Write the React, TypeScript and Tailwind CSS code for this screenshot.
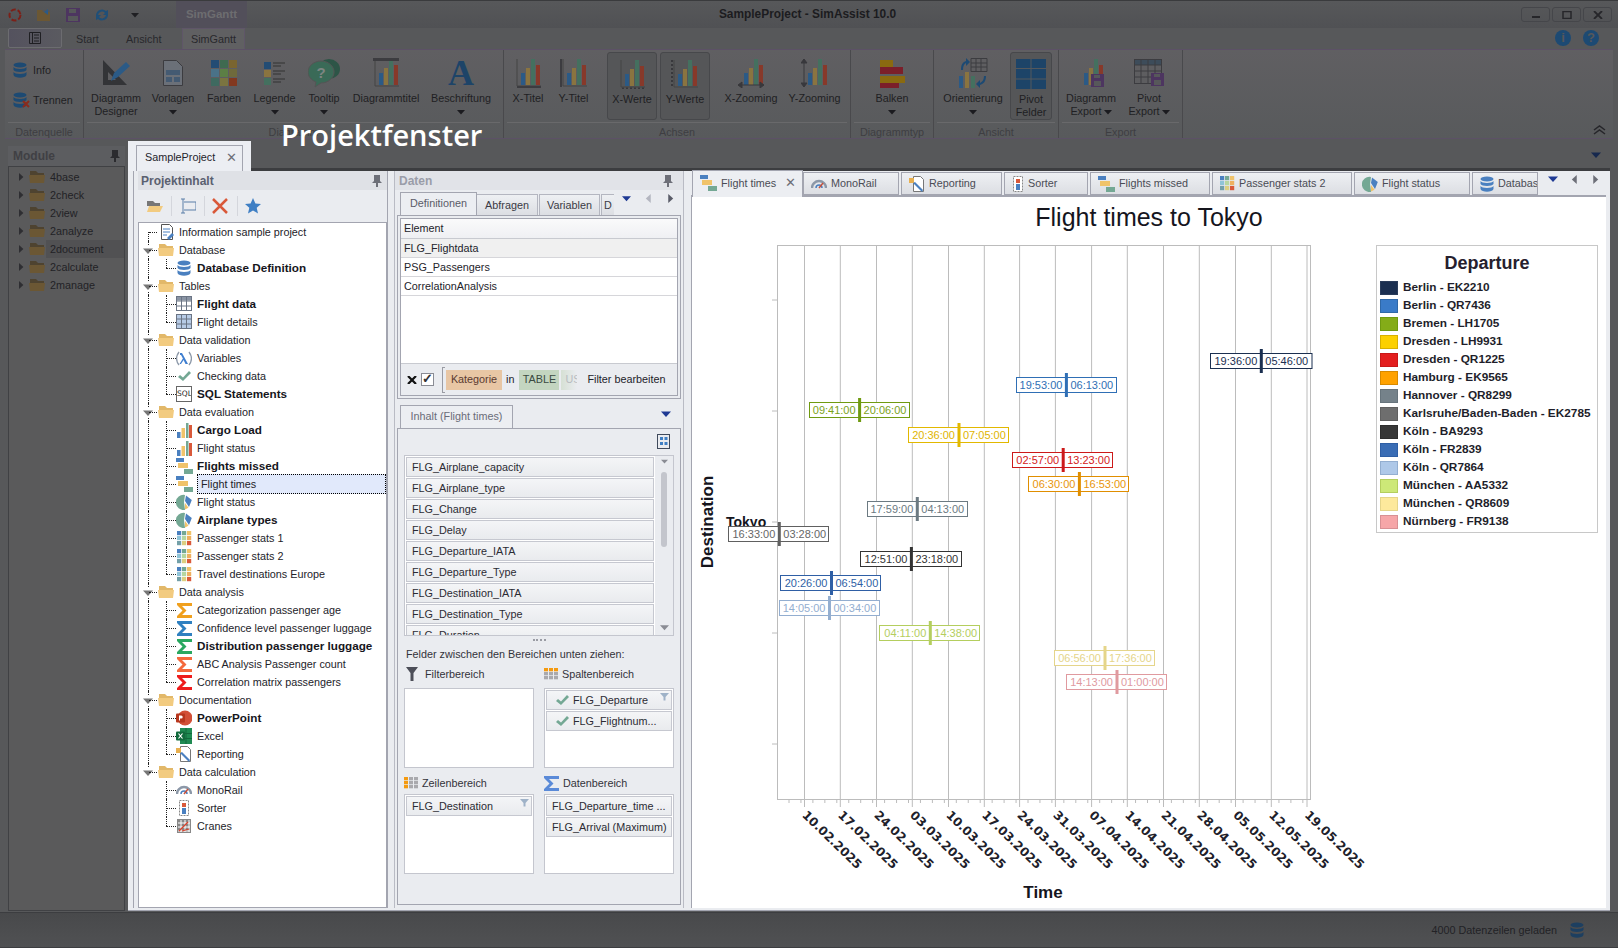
import type { ReactNode } from 'react'

type Pal = { b: string; y: string; g: string; r: string }
const dim: Pal = { b: '#2b5a86', y: '#8a7440', g: '#44705f', r: '#87392a' }
const lit: Pal = { b: '#4a80c0', y: '#f0c36a', g: '#74a894', r: '#d9593a' }

function Svg({ s = 16, w, h, children }: { s?: number; w?: number; h?: number; children: ReactNode }) {
  return <svg width={w ?? s} height={h ?? s} viewBox={`0 0 ${w ?? s} ${h ?? s}`} className="shrink-0">{children}</svg>
}

const Folder = ({ d }: { d?: boolean }) => (
  <Svg w={16} h={14}>
    <path d="M1 1h6l2 2h6v3H1z" fill={d ? '#4e4330' : '#e2b869'} />
    <path d="M1 13 0 5h16l-1 8z" fill={d ? '#6b5734' : '#f2cb80'} />
  </Svg>
)
const Db = ({ c = '#4a80c0' }: { c?: string }) => (
  <Svg w={14} h={16}>
    <ellipse cx="7" cy="3" rx="6.5" ry="2.6" fill={c} />
    <path d="M.5 5c1 2.6 12 2.6 13 0v3c-1 2.6-12 2.6-13 0zM.5 10c1 2.6 12 2.6 13 0v3c-1 3.6-12 3.6-13 0z" fill={c} />
  </Svg>
)
const Bars = ({ p = lit }: { p?: Pal }) => (
  <Svg>
    <rect x="1" y="10" width="3.5" height="6" fill={p.b} />
    <rect x="5.5" y="6" width="3.5" height="10" fill={p.y} />
    <rect x="10" y="1" width="2.5" height="15" fill={p.g} />
    <rect x="13" y="3" width="3" height="13" fill={p.r} />
  </Svg>
)
const Gantt = () => (
  <Svg w={17} h={16}>
    <rect x="0" y="0" width="8" height="4" fill="#4a80c0" />
    <rect x="2" y="5" width="10" height="5" fill="#f0c36a" />
    <rect x="8" y="11" width="9" height="5" fill="#74a894" />
  </Svg>
)
const Pie = () => (
  <Svg>
    <path d="M9 1A7.6 7.6 0 1 0 9 15.9L8 8z" fill="#74a894" />
    <path d="M10 1.5 15.8 6 13 13 9 7z" fill="#4a80c0" />
    <path d="M9 9l3.5 4.8L9 15.5z" fill="#f0c36a" />
  </Svg>
)
const Heat = () => (
  <Svg w={15} h={15}>
    {['#4a80c0', '#74a894', '#f0c36a', '#8fc4d8', '#b6d6a0', '#eeb060', '#74a0a8', '#dccf80', '#d9593a'].map((c, i) => (
      <rect key={i} x={(i % 3) * 5} y={Math.floor(i / 3) * 5} width="4.2" height="4.2" fill={c} />
    ))}
  </Svg>
)
const Sigma = ({ c }: { c: string }) => (
  <Svg w={15} h={15}>
    <path d="M0 0h15v3H5l4.5 4.5L5 12h10v3H0v-2l5.5-5.5L0 2z" fill={c} />
  </Svg>
)
const Doc = () => (
  <Svg>
    <path d="M3.500.5h8l3 3v12h-11z" fill="#fff" stroke="#555" />
    <path d="M5 5h7M5 8h7M5 11h4" stroke="#4a80c0" />
    <path d="m9 14 5-5 2 2-5 5z" fill="#4a80c0" />
  </Svg>
)
const Wand = () => (
  <Svg>
    <path d="M4.500.5h7l3 3v12h-10z" fill="#fff" stroke="#777" />
    <path d="M0 2h5v5H0z" fill="#e8b050" />
    <path d="m4 7 2-1 8 8-1 2z" fill="#4a80c0" />
  </Svg>
)
const Mono = () => (
  <Svg w={16} h={14}>
    <path d="M1 11a7 7 0 0 1 14 0" fill="none" stroke="#8c98a8" strokeWidth="2.400" />
    <path d="M5 11a3 3 0 0 1 6 0" fill="none" stroke="#4a80c0" strokeWidth="1.500" />
    <path d="m8 11 4-5" stroke="#c8503a" strokeWidth="1.500" />
  </Svg>
)
const Sorter = () => (
  <Svg w={12} h={16}>
    <rect x="1.500" y=".5" width="9" height="15" fill="#fff" stroke="#888" strokeDasharray="2 1" />
    <rect x="4" y="3" width="4" height="4" fill="#d9593a" />
    <rect x="4" y="8" width="4" height="6" fill="#4a80c0" />
  </Svg>
)
const Crane = () => (
  <Svg w={14} h={14}>
    <rect width="14" height="14" fill="#888" />
    <path d="M1 4h12M1 8h12M1 12h12M4 1v12M8 1v12M12 1v12" stroke="#fff" />
    <path d="m2 12 9-9M5 12l7-2" stroke="#d9402a" strokeWidth="1.300" />
  </Svg>
)
const GridBlue = ({ head }: { head?: boolean }) => (
  <Svg>
    <rect x=".5" y=".5" width="15" height="14" fill={head ? '#fff' : '#b7cbe6'} stroke="#6a7484" />
    {head && <rect x="1" y="1" width="14" height="3.500" fill="#8a94a4" />}
    <path d="M1 5h14M1 10h14M5.500 1v13M10.500 1v13" stroke="#6a7484" />
  </Svg>
)
const Lambda = () => (
  <Svg w={16} h={15}>
    <path d="M3 1C0 5 0 10 3 14M13 1c3 4 3 9 0 13" fill="none" stroke="#8c98a8" strokeWidth="1.300" />
    <path d="M4 2h2l6 11H9.500L7.600 9 5 13H3.500l3.400-5.500L5 4H4z" fill="#3f7fd0" />
  </Svg>
)
const Check = ({ c = '#74a894' }: { c?: string }) => (
  <Svg w={14} h={12}>
    <path d="m1 7 2-2 3 2.500L12 1l2 2-8 8z" fill={c} />
  </Svg>
)
const Ppt = () => (
  <Svg>
    <circle cx="9" cy="8" r="7.500" fill="#d24f36" />
    <rect x="0" y="3.500" width="9" height="9" rx="1" fill="#b7361d" />
    <path d="M3 5.500h2.200a1.500 1.500 0 0 1 0 3H4v2H3z" fill="#fff" />
  </Svg>
)
const Xls = () => (
  <Svg>
    <rect x="4" y="0" width="12" height="16" fill="#1f8a52" />
    <path d="M10 0v16M4 5.500h12M4 10.500h12" stroke="#12683c" />
    <rect x="0" y="3.500" width="9" height="9" rx="1" fill="#116b3d" />
    <path d="m2.500 5.500 4 5M6.500 5.500l-4 5" stroke="#fff" strokeWidth="1.200" />
  </Svg>
)
const Sql = () => (
  <span className="w-[16px] h-[16px] shrink-0 border border-[#666] text-[7.500px] leading-[14px] text-center text-[#222] font-['DejaVu_Sans',sans-serif] overflow-hidden">SQL</span>
)

const Tri = ({ c = '#2e2e32', d = 'down', w = 8 }: { c?: string; d?: 'down' | 'left' | 'right'; w?: number }) => (
  <Svg w={w} h={w}>
    <path d={d === 'down' ? `M0 ${w / 4}h${w}L${w / 2} ${w * 0.8}z` : d === 'right' ? `M${w / 4} 0v${w}L${w * 0.8} ${w / 2}z` : `M${w * 0.75} 0v${w}L${w * 0.2} ${w / 2}z`} fill={c} />
  </Svg>
)
const Pin = ({ c }: { c: string }) => (
  <Svg w={10} h={12}>
    <path d="M2 0h6v6l2 2H6v4H4V8H0l2-2z" fill={c} />
  </Svg>
)

type Row = { l: 0 | 1; t: string; b?: boolean; i: ReactNode; sel?: boolean; last?: boolean; end?: boolean; leaf?: boolean }
const fo = <Folder />
const rows: Row[] = [
  { l: 0, t: 'Information sample project', i: <Doc />, leaf: true },
  { l: 0, t: 'Database', i: fo },
  { l: 1, t: 'Database Definition', b: true, i: <Db />, last: true },
  { l: 0, t: 'Tables', i: fo },
  { l: 1, t: 'Flight data', b: true, i: <GridBlue head /> },
  { l: 1, t: 'Flight details', i: <GridBlue />, last: true },
  { l: 0, t: 'Data validation', i: fo },
  { l: 1, t: 'Variables', i: <Lambda /> },
  { l: 1, t: 'Checking data', i: <Check /> },
  { l: 1, t: 'SQL Statements', b: true, i: <Sql />, last: true },
  { l: 0, t: 'Data evaluation', i: fo },
  { l: 1, t: 'Cargo Load', b: true, i: <Bars /> },
  { l: 1, t: 'Flight status', i: <Bars /> },
  { l: 1, t: 'Flights missed', b: true, i: <Gantt /> },
  { l: 1, t: 'Flight times', i: <Gantt />, sel: true },
  { l: 1, t: 'Flight status', i: <Pie /> },
  { l: 1, t: 'Airplane types', b: true, i: <Pie /> },
  { l: 1, t: 'Passenger stats 1', i: <Heat /> },
  { l: 1, t: 'Passenger stats 2', i: <Heat /> },
  { l: 1, t: 'Travel destinations Europe', i: <Heat />, last: true },
  { l: 0, t: 'Data analysis', i: fo },
  { l: 1, t: 'Categorization passenger age', i: <Sigma c="#f0a01e" /> },
  { l: 1, t: 'Confidence level passenger luggage', i: <Sigma c="#2f80c0" /> },
  { l: 1, t: 'Distribution passenger luggage', b: true, i: <Sigma c="#2aa860" /> },
  { l: 1, t: 'ABC Analysis Passenger count', i: <Sigma c="#f4693c" /> },
  { l: 1, t: 'Correlation matrix passengers', i: <Sigma c="#ee1c1c" />, last: true },
  { l: 0, t: 'Documentation', i: fo },
  { l: 1, t: 'PowerPoint', b: true, i: <Ppt /> },
  { l: 1, t: 'Excel', i: <Xls /> },
  { l: 1, t: 'Reporting', i: <Wand />, last: true },
  { l: 0, t: 'Data calculation', i: fo, end: true },
  { l: 1, t: 'MonoRail', i: <Mono /> },
  { l: 1, t: 'Sorter', i: <Sorter /> },
  { l: 1, t: 'Cranes', i: <Crane />, last: true },
]

function TreeRow({ r, idx }: { r: Row; idx: number }) {
  const pastEnd = idx > 30
  return (
    <div className="relative flex items-center h-[18px] text-[10.800px] text-[#23232a]">
      {!r.end && !pastEnd && <span className={`absolute left-[9px] bottom-0 border-l border-dotted border-[#222] ${idx === 0 ? 'top-[9px]' : 'top-0'}`} />}
      {r.end && <span className="absolute left-[9px] top-0 h-[6px] border-l border-dotted border-[#222]" />}
      {r.l === 1 && (
        <>
          <span className={`absolute left-[27px] top-0 border-l border-dotted border-[#222] ${r.last ? 'h-[9px]' : 'h-[18px]'}`} />
          <span className="absolute left-[27px] top-[9px] w-[10px] border-t border-dotted border-[#222]" />
        </>
      )}
      {r.l === 0 && !r.leaf && (
        <span className="absolute left-[4px] top-[5px] bg-white">
          <Tri c="#777" w={10} />
        </span>
      )}
      {r.l === 0 && <span className="absolute left-[10px] top-[9px] w-[8px] border-t border-dotted border-[#222]" />}
      <span className={`relative flex items-center justify-center ${r.l === 0 ? 'ml-[19px] w-[16px]' : 'ml-[37px] w-[16px]'}`}>{r.i}</span>
      <span className={`ml-[5px] whitespace-nowrap leading-[18px] ${r.b ? 'font-bold text-[11.700px] text-[#16161c]' : ''} ${r.sel ? 'flex-1 ml-[1px] pl-[3px] bg-[#e1e9fb] border border-dotted border-black leading-[16px]' : ''}`}>{r.t}</span>
    </div>
  )
}

function RibbonBtn({ w, icon, l1, l2, arrow, active }: { w: number; icon: ReactNode; l1: string; l2?: string; arrow?: boolean; active?: boolean }) {
  return (
    <div style={{ width: w }} className={`flex flex-col items-center h-[68px] mt-[2px] pt-[6px] shrink-0 text-[10.800px] leading-[13px] text-[#1f1f23] ${active ? 'rounded-[3px] bg-[#555658] border border-[#47484b]' : ''}`}>
      <div className="h-[30px] flex items-center justify-center">{icon}</div>
      <div className="mt-[4px] whitespace-nowrap">{l1}</div>
      <div className="flex items-center gap-[2px] h-[13px] whitespace-nowrap">
        {l2}
        {arrow && <Tri c="#1b1b1f" w={8} />}
      </div>
    </div>
  )
}

function Group({ w, label, children }: { w: number; label: string; children?: ReactNode }) {
  return (
    <div style={{ width: w }} className="flex flex-col h-full border-r border-[#49494c] shrink-0">
      <div className="flex h-[72px]">{children}</div>
      <div className="mx-[3px] border-t border-[#69696b] h-[16px] text-center text-[10.800px] leading-[19px] text-[#3e3e42]">{label}</div>
    </div>
  )
}

const ChartIcon = ({ children, zoom }: { children?: ReactNode; zoom?: boolean }) => (
  <Svg w={28} h={30}>
    <rect x="7" y="15" width="4" height="12" fill={dim.b} />
    <rect x="12" y="10" width="4" height="17" fill={dim.y} />
    <rect x="17" y="1" width="4" height="26" fill={dim.g} />
    <rect x="22" y="7" width="4" height="20" fill={dim.r} />
    {!zoom && <path d="M3 1v27h24" fill="none" stroke="#444" />}
    {children}
  </Svg>
)

function Tab({ w, icon, t, active, close }: { w: number; icon: ReactNode; t: string; active?: boolean; close?: boolean }) {
  return (
    <div style={{ width: w }} className={`flex items-center gap-[4px] shrink-0 pl-[7px] text-[10.800px] text-[#4a4c55] whitespace-nowrap overflow-hidden border border-[#a3a5b0] ${active ? 'h-[27px] bg-[#eceef2] border-b-0 -mb-[2px] pb-[2px]' : 'h-[23px] bg-gradient-to-b from-[#eef0f3] to-[#dcdee3] mr-[2px]'}`}>
      {icon}
      <span className="flex-1">{t}</span>
      {close && <span className="mr-[6px] text-[13px] font-bold text-[#6d6f78] font-['DejaVu_Sans',sans-serif]">✕</span>}
    </div>
  )
}

function Field({ t, check, filter }: { t: string; check?: boolean; filter?: boolean }) {
  return (
    <div className="relative flex items-center gap-[4px] h-[20px] mb-[1px] pl-[5px] border border-[#c6c8d0] bg-gradient-to-b from-[#f4f5f7] to-[#e9ebee] text-[10.800px] text-[#2b2b33] whitespace-nowrap overflow-hidden shrink-0">
      {check && <span className="ml-[3px]"><Check /></span>}
      {t}
      {filter && (
        <svg width="9" height="9" viewBox="0 0 9 9" className="absolute right-[2px] top-[1px]">
          <path d="M0 1h9L5.500 5v3.500h-2V5z" fill="#9fb2c8" />
        </svg>
      )}
    </div>
  )
}

function DropBox({ icon, t, children, top }: { icon: ReactNode; t: string; children?: ReactNode; top?: boolean }) {
  return (
    <div className="w-[130px]">
      <div className={`flex items-center gap-[4px] text-[10.800px] text-[#33333b] ${top ? 'h-[20px] mb-[4px]' : 'h-[22px]'}`}>
        {icon}
        {t}
      </div>
      <div className="h-[80px] bg-white border border-[#c4c6ce] p-[1px] flex flex-col">{children}</div>
    </div>
  )
}

const MiniGrid = ({ a }: { a: 'top' | 'left' }) => (
  <Svg w={14} h={12}>
    {[0, 1, 2, 3, 4, 5, 6, 7, 8].map(i => {
      const x = (i % 3) * 5
      const y = Math.floor(i / 3) * 4
      const on = a === 'top' ? y === 0 : x === 0
      return <rect key={i} x={x} y={y} width="4" height="3.300" fill={on ? '#f49a10' : '#a9a9ad'} />
    })}
  </Svg>
)

const gridX = [803.5, 839.3, 875.5, 911.3, 947.5, 983.3, 1018.6, 1054.4, 1090.6, 1126.3, 1162.5, 1198.3, 1234.5, 1270.3, 1306]
const dates = ['10.02.2025', '17.02.2025', '24.02.2025', '03.03.2025', '10.03.2025', '17.03.2025', '24.03.2025', '31.03.2025', '07.04.2025', '14.04.2025', '21.04.2025', '28.04.2025', '05.05.2025', '12.05.2025', '19.05.2025']

const gantt = [
  { x1: 1209.5, x2: 1311, y: 353, lx: 1260.3, a: '19:36:00', b: '05:46:00', c: '#1b2f50', t: '#1b2f50' },
  { x1: 1015.5, x2: 1115.5, y: 377, lx: 1065.4, a: '19:53:00', b: '06:13:00', c: '#2f6fb5', t: '#2f6fb5' },
  { x1: 808.5, x2: 908.5, y: 402, lx: 858.6, a: '09:41:00', b: '20:06:00', c: '#6f9a10', t: '#7ba21a' },
  { x1: 907.5, x2: 1007.5, y: 427, lx: 958, a: '20:36:00', b: '07:05:00', c: '#e2b800', t: '#e0b400' },
  { x1: 1011.5, x2: 1111.5, y: 452, lx: 1062.2, a: '02:57:00', b: '13:23:00', c: '#cc1a1a', t: '#d42020' },
  { x1: 1027.5, x2: 1127.5, y: 476, lx: 1078.4, a: '06:30:00', b: '16:53:00', c: '#e08e00', t: '#e8950a' },
  { x1: 866.5, x2: 966.5, y: 501, lx: 916.3, a: '17:59:00', b: '04:13:00', c: '#6c7a82', t: '#6c7a82' },
  { x1: 727.5, x2: 827.5, y: 526, lx: 778.3, a: '16:33:00', b: '03:28:00', c: '#606060', t: '#666666' },
  { x1: 859.5, x2: 960.5, y: 551, lx: 910.4, a: '12:51:00', b: '23:18:00', c: '#333333', t: '#333333' },
  { x1: 779.5, x2: 879.5, y: 575, lx: 830.5, a: '20:26:00', b: '06:54:00', c: '#2f5fa5', t: '#2f5fa5' },
  { x1: 778.5, x2: 878.5, y: 600, lx: 828.5, a: '14:05:00', b: '00:34:00', c: '#93aed0', t: '#93aed0' },
  { x1: 878.5, x2: 978.5, y: 625, lx: 929.3, a: '04:11:00', b: '14:38:00', c: '#b4ce5e', t: '#b4ce5e' },
  { x1: 1053.5, x2: 1153.5, y: 650, lx: 1104, a: '06:56:00', b: '17:36:00', c: '#e5d58a', t: '#e5d58a' },
  { x1: 1065.5, x2: 1165.5, y: 674, lx: 1116, a: '14:13:00', b: '01:00:00', c: '#e09a9f', t: '#e09a9f' },
]

const legend = [
  ['Berlin - EK2210', 'bg-[#1b2f50] border-[#2a3c5a]'],
  ['Berlin - QR7436', 'bg-[#3a7bc8] border-[#2f68a8]'],
  ['Bremen - LH1705', 'bg-[#84ac18] border-[#6f9a10]'],
  ['Dresden - LH9931', 'bg-[#fcd000] border-[#d8b000]'],
  ['Dresden - QR1225', 'bg-[#e31e1e] border-[#c81818]'],
  ['Hamburg - EK9565', 'bg-[#ffa200] border-[#d88a00]'],
  ['Hannover - QR8299', 'bg-[#75828a] border-[#67747c]'],
  ['Karlsruhe/Baden-Baden - EK2785', 'bg-[#6e6e6e] border-[#606060]'],
  ['Köln - BA9293', 'bg-[#373737] border-[#2e2e2e]'],
  ['Köln - FR2839', 'bg-[#3a6db5] border-[#2f5fa5]'],
  ['Köln - QR7864', 'bg-[#aec8e8] border-[#93aed0]'],
  ['München - AA5332', 'bg-[#cde878] border-[#b4ce5e]'],
  ['München - QR8609', 'bg-[#fde99c] border-[#e5d58a]'],
  ['Nürnberg - FR9138', 'bg-[#f6a6a8] border-[#d89094]'],
]

function Plot() {
  const minor: number[] = []
  for (let x = 788; x < 1306; x += 11.95) minor.push(x)
  return (
    <svg width="684" height="711" viewBox="691 197 684 711" className="shrink-0 font-['Liberation_Sans',sans-serif]">
      <text x="1148" y="226" textAnchor="middle" fontSize="25" fill="#15151d">Flight times to Tokyo</text>
      <rect x="776.5" y="245.5" width="533" height="554" fill="none" stroke="#bcbcbc" />
      {gridX.map(x => <path key={x} d={`M${x} 245V807`} stroke="#bcbcbc" />)}
      {minor.map(x => <path key={x} d={`M${x} 799v4`} stroke="#bcbcbc" />)}
      {[300, 411, 522, 633, 744].map(y => <path key={y} d={`M771 ${y}h6`} stroke="#bcbcbc" />)}
      <text x="725" y="527" fontSize="14" fontWeight="700" fill="#15151d">Tokyo</text>
      <text transform="translate(712 522) rotate(-90)" textAnchor="middle" fontSize="17" fontWeight="700" fill="#15151d">Destination</text>
      {gantt.map(g => (
        <g key={g.a}>
          <rect x={g.x1} y={g.y + 0.5} width={g.x2 - g.x1} height="15" fill="#fff" stroke={g.c} />
          <text x={g.lx - 4} y={g.y + 12} textAnchor="end" fontSize="11" fill={g.t}>{g.a}</text>
          <text x={g.lx + 4} y={g.y + 12} fontSize="11" fill={g.t}>{g.b}</text>
          <rect x={g.lx - 1.5} y={g.y - 4} width="3" height="24" fill={g.c} />
        </g>
      ))}
      {dates.map((d, i) => (
        <text key={i} transform={`translate(${gridX[i] - 3} 816) rotate(44)`} fontSize="12.2" fontWeight="700" fontFamily="DejaVu Sans" fill="#20202a">{d}</text>
      ))}
      <text x="1042" y="898" textAnchor="middle" fontSize="17" fontWeight="700" fill="#15151d">Time</text>
    </svg>
  )
}

const scrollRows = ['FLG_Airplane_capacity', 'FLG_Airplane_type', 'FLG_Change', 'FLG_Delay', 'FLG_Departure_IATA', 'FLG_Departure_Type', 'FLG_Destination_IATA', 'FLG_Destination_Type', 'FLG_Duration']

export default function App() {
  return (
    <div className="relative w-[1618px] h-[948px] overflow-hidden bg-[#57585a] font-['Liberation_Sans',sans-serif] flex flex-col">
      {/* title bar */}
      <div className="relative flex items-center h-[28px] bg-gradient-to-b from-[#57585a] to-[#505154] border-t border-[#3a3b3d] shrink-0">
        <div className="flex items-center gap-[13px] pl-[7px]">
          <Svg>
            <circle cx="8" cy="8" r="5.500" fill="none" stroke="#7c2018" strokeWidth="2" strokeDasharray="5 2" />
          </Svg>
          <Svg>
            <path d="M1 3h5l1 2h7v9H1z" fill="#6b5734" />
            <path d="M8 5l4-3v6z" fill={dim.b} />
          </Svg>
          <Svg>
            <rect x="1" y="1" width="14" height="14" fill="#4d3560" />
            <rect x="4" y="2" width="7" height="4" fill="#57585a" />
            <rect x="3" y="9" width="10" height="5" fill="#57585a" />
          </Svg>
          <Svg>
            <path d="M2 8a6 6 0 0 1 10-4l2-1v5H9l2-2a4 4 0 0 0-7 2zM14 8a6 6 0 0 1-10 4l-2 1V8h5l-2 2a4 4 0 0 0 7-2z" fill="#1f4f78" />
          </Svg>
          <span className="ml-[8px]"><Tri c="#1f1f23" w={8} /></span>
        </div>
        <div className="absolute left-[176px] top-0 w-[71px] h-[27px] bg-[#524f5a] text-center text-[11.500px] font-bold leading-[27px] text-[#6d6d70]">SimGantt</div>
        <div className="absolute inset-x-0 text-center text-[11.900px] font-bold text-[#1c1c20] pr-[3px]">SampleProject - SimAssist 10.0</div>
        <div className="ml-auto flex gap-[2px] pr-[6px]">
          <span className="flex items-center justify-center w-[29px] h-[15px] rounded-[3px] border border-[#45464a]"><Svg w={10} h={8}><rect x="1" y="5" width="8" height="2" fill="#26262a" /></Svg></span>
          <span className="flex items-center justify-center w-[29px] h-[15px] rounded-[3px] border border-[#45464a]"><Svg w={10} h={8}><rect x="1" y=".5" width="8" height="7" fill="none" stroke="#26262a" strokeWidth="1.500" /></Svg></span>
          <span className="flex items-center justify-center w-[29px] h-[15px] rounded-[3px] border border-[#45464a]"><Svg w={10} h={8}><path d="m1 0 8 8M9 0 1 8" stroke="#26262a" strokeWidth="1.800" /></Svg></span>
        </div>
      </div>

      {/* ribbon tabs */}
      <div className="flex items-end h-[21px] pl-[8px] text-[10.800px] text-[#28282c] shrink-0 relative">
        <div className="flex items-center justify-center w-[54px] h-[20px] mb-[1px] rounded-[2px] bg-gradient-to-r from-[#54525e] to-[#5a5a60] border border-[#6c6c70]">
          <Svg w={14} h={14}>
            <path d="M1.500 1.500h11v11h-11zM4.500 1.500v11M6 4h5M6 7h5M6 10h5" fill="none" stroke="#1f1f23" />
          </Svg>
        </div>
        <div className="w-[14px]" />
        <div className="w-[24px] h-[20px] leading-[20px]">Start</div>
        <div className="w-[26px]" />
        <div className="w-[37px] h-[20px] leading-[20px]">Ansicht</div>
        <div className="w-[19px]" />
        <div className="w-[63px] h-[21px] bg-[#606062] border-x border-t border-[#5f5668] text-center leading-[20px]">SimGantt</div>
        <div className="absolute right-[19px] top-[2px] flex gap-[12px]">
          {['i', '?'].map(s => (
            <span key={s} className="w-[16px] h-[16px] rounded-full bg-[#1d4a73] text-center text-[13px] leading-[16px] font-bold text-[#57585a]">{s}</span>
          ))}
        </div>
      </div>

      {/* ribbon */}
      <div className="relative flex h-[90px] mx-[5px] bg-gradient-to-b from-[#605f62] to-[#585a5c] border-y border-[#5c5166] border-x-[#48484b] shrink-0">
        <Group w={79} label="Datenquelle">
          <div className="flex flex-col gap-[14px] pl-[8px] pt-[12px] text-[10.800px] text-[#1f1f23]">
            <div className="flex items-center gap-[6px] h-[16px]"><Db c="#1d4a73" />Info</div>
            <div className="flex items-center gap-[6px] h-[16px]">
              <span className="relative">
                <Db c="#1d4a73" />
                <span className="absolute -right-[3px] bottom-0"><Svg w={8} h={8}><path d="m1 1 6 6M7 1 1 7" stroke="#8a2b1c" strokeWidth="2" /></Svg></span>
              </span>
              Trennen
            </div>
          </div>
        </Group>
        <Group w={420} label="Diagramm">
          <RibbonBtn w={64} l1="Diagramm" l2="Designer" icon={
            <Svg w={30} h={28}>
              <path d="M2 1v25h24zM7 13v8h8z" fill="#333437" fillRule="evenodd" />
              <path d="m10 22 3-8L25 3l4 4-12 11z" fill="#2b5a86" />
            </Svg>} />
          <RibbonBtn w={50} l1="Vorlagen" arrow icon={
            <Svg w={20} h={26}>
              <path d="M.5.5h13l6 6v19H.5z" fill="#6b7078" stroke="#3c3c40" />
              <path d="M3 10h14v5H3zM3 17h6v5H3zM11 17h6v5h-6z" fill="#445a72" />
            </Svg>} />
          <RibbonBtn w={52} l1="Farben" icon={
            <Svg w={27} h={27}>
              {['#234c74', '#3f6a50', '#7a6530', '#4a7288', '#5c7f45', '#6f6a3c', '#3f6a60', '#7a7440', '#82381f'].map((c, i) => (
                <rect key={i} x={(i % 3) * 9} y={Math.floor(i / 3) * 9} width="8" height="8" fill={c} />
              ))}
            </Svg>} />
          <RibbonBtn w={49} l1="Legende" arrow icon={
            <Svg w={22} h={24}>
              <rect y="1" width="7" height="7" fill="#234c74" /><rect y="9" width="7" height="7" fill="#8a7440" /><rect y="17" width="7" height="7" fill="#44705f" />
              <path d="M9 2h12M9 5h8M9 10h12M9 13h8M9 18h12M9 21h8" stroke="#333" />
            </Svg>} />
          <RibbonBtn w={50} l1="Tooltip" arrow icon={
            <Svg w={32} h={30}>
              <ellipse cx="21" cy="11" rx="11" ry="10" fill="#2d5547" />
              <path d="M13 3c7 0 13 5 13 11s-6 11-13 11l-6 4 1-5C3 22 0 18 0 14 0 8 6 3 13 3z" fill="#3a6a57" stroke="#555" />
              <text x="13" y="20" textAnchor="middle" fontSize="15" fontWeight="700" fill="#7d8582">?</text>
            </Svg>} />
          <RibbonBtn w={74} l1="Diagrammtitel" icon={
            <ChartIcon>
              <rect x="1" y="0" width="26" height="3" fill="#3c3c40" />
            </ChartIcon>} />
          <RibbonBtn w={76} l1="Beschriftung" arrow icon={<span className="text-[36px] leading-[30px] font-bold text-[#1d4468] font-['Liberation_Serif',serif]">A</span>} />
        </Group>
        <Group w={347} label="Achsen">
          <div className="w-[2px]" />
          <RibbonBtn w={44} l1="X-Titel" icon={<ChartIcon><rect x="3" y="28" width="24" height="2" fill="#3c3c40" /></ChartIcon>} />
          <RibbonBtn w={47} l1="Y-Titel" icon={<ChartIcon><rect x="0" y="1" width="2" height="28" fill="#3c3c40" /></ChartIcon>} />
          <div className="w-[10px]" />
          <RibbonBtn w={50} l1="X-Werte" active icon={<ChartIcon><path d="M4 29.500h23" stroke="#38383c" strokeWidth="2" strokeDasharray="2 2" /></ChartIcon>} />
          <div className="w-[3px]" />
          <RibbonBtn w={50} l1="Y-Werte" active icon={<ChartIcon><path d="M1 1v27" stroke="#38383c" strokeWidth="2" strokeDasharray="2 2" /></ChartIcon>} />
          <div className="w-[12px]" />
          <RibbonBtn w={58} l1="X-Zooming" icon={<ChartIcon zoom><path d="M1 27h26M1 27l4-3v6zM27 27l-4-3v6z" stroke="#38383c" fill="#38383c" /></ChartIcon>} />
          <RibbonBtn w={69} l1="Y-Zooming" icon={<ChartIcon zoom><path d="M3 1v28M3 1 0 5h6zM3 29l-3-4h6z" stroke="#38383c" fill="#38383c" /></ChartIcon>} />
        </Group>
        <Group w={83} label="Diagrammtyp">
          <div className="w-[6px]" />
          <RibbonBtn w={70} l1="Balken" arrow icon={
            <Svg w={26} h={30}>
              <rect x="1" y="2" width="13" height="7" fill="#8a6a10" /><rect x="1" y="9" width="23" height="7" fill="#7b1f2a" />
              <rect x="1" y="18" width="25" height="7" fill="#8a6a10" /><rect x="1" y="25" width="19" height="5" fill="#7b1f2a" />
            </Svg>} />
        </Group>
        <Group w={125} label="Ansicht">
          <div className="w-[2px]" />
          <RibbonBtn w={74} l1="Orientierung" arrow icon={
            <Svg w={30} h={30}>
              <rect x="1" y="18" width="4" height="12" fill={dim.b} /><rect x="7" y="14" width="4" height="16" fill={dim.y} /><rect x="13" y="18" width="4" height="12" fill={dim.g} />
              <path d="M13 .5h16v13H13zM13 5h16M13 9h16M18 1v12M23 1v12" fill="none" stroke="#3c3c40" />
              <path d="M3 12c0-6 2-8 5-9V0l4 4-4 4V5c-2 1-3 3-3 7z M28 18c0 6-3 8-6 9v3l-4-4 4-4v3c2-1 4-3 4-7z" fill="#1d4a73" />
            </Svg>} />
          <RibbonBtn w={42} l1="Pivot" l2="Felder" active icon={
            <Svg w={30} h={30}>
              <rect width="30" height="30" fill="#1d4468" /><path d="M0 9.500h30M0 20h30M15 0v30" stroke="#54585c" />
            </Svg>} />
        </Group>
        <Group w={124} label="Export">
          <RibbonBtn w={64} l1="Diagramm" l2="Export" arrow icon={
            <ChartIcon zoom><rect x="14" y="16" width="13" height="13" fill="#4d3560" /><rect x="17" y="17" width="6" height="3" fill="#57585a" /><rect x="17" y="23" width="7" height="5" fill="#57585a" /></ChartIcon>} />
          <RibbonBtn w={52} l1="Pivot" l2="Export" arrow icon={
            <Svg w={30} h={28}>
              <rect x=".5" y=".5" width="27" height="24" fill="none" stroke="#3c3c40" /><rect x="1" y="1" width="26" height="5" fill="#3d4c5a" />
              <path d="M1 6h27M1 12h27M1 18h27M7 1v24M14 1v24M21 1v24" stroke="#3c3c40" />
              <rect x="17" y="14" width="13" height="13" fill="#4d3560" /><rect x="20" y="15" width="6" height="3" fill="#57585a" /><rect x="20" y="21" width="7" height="5" fill="#57585a" />
            </Svg>} />
        </Group>
        <span className="absolute right-[7px] bottom-[3px]">
          <svg width="13" height="10" viewBox="0 0 13 10"><path d="m1 5 5.500-4L12 5M1 9l5.500-4L12 9" fill="none" stroke="#26262a" strokeWidth="1.500" /></svg>
        </span>
      </div>

      {/* body */}
      <div className="flex flex-1 min-h-0">
        {/* modules, dimmed */}
        <div className="w-[128px] pl-[8px] pr-[3px] pt-[7px] shrink-0 flex flex-col h-[772px]">
          <div className="flex items-center justify-between h-[20px] pl-[5px] pr-[5px] bg-[#5c5d60] text-[12px] font-bold text-[#404044]">
            Module
            <Pin c="#2b2b2f" />
          </div>
          <div className="flex-1 border border-[#404144] bg-[#5a5a5b] pt-[1px]">
            {['4base', '2check', '2view', '2analyze', '2document', '2calculate', '2manage'].map(m => (
              <div key={m} className="flex items-center h-[18px] text-[10.800px] text-[#222226]">
                <span className="ml-[8px] w-[10px]"><Tri c="#2e2e32" d="right" w={8} /></span>
                <span className="ml-[2px]"><Folder d /></span>
                <span className={`ml-[1px] pl-[4px] flex-1 leading-[18px] ${m === '2document' ? 'bg-[#515153]' : ''}`}>{m}</span>
              </div>
            ))}
          </div>
        </div>

        <div className="flex flex-col flex-1 min-w-0 pr-[8px]">
          <div className="flex h-[32px] shrink-0">
            <div className="w-[123px] mt-[2px] pl-[8px] pt-[4px] bg-[#eceef3]">
              <div className="flex items-center justify-between h-[26px] w-[107px] pl-[8px] pr-[5px] pb-[2px] border-x border-t border-[#a3a5b0] bg-[#eceef3] text-[10.800px] text-[#24242c]">
                SampleProject
                <span className="text-[13px] font-bold text-[#6d6f78] font-['DejaVu_Sans',sans-serif]">✕</span>
              </div>
            </div>
            <div className="flex-1 flex justify-end pr-[9px] pt-[11px] border-b-[3px] border-[#3c3d40]">
              <Tri c="#16284e" w={10} />
            </div>
          </div>

          {/* project window */}
          <div className="flex h-[740px] bg-[#eaecf0] shrink-0 pl-[5px] border-b border-[#a3a5b0]">
            <div className="w-[255px] flex flex-col shrink-0 border-x border-[#a3a5b0] mb-[2px] pl-[4px]">
              <div className="flex items-center justify-between h-[19px] pl-[3px] pr-[5px] bg-[#dfe1e6] text-[12px] font-bold text-[#5a6070]">
                Projektinhalt
                <Pin c="#6d6f78" />
              </div>
              <div className="flex items-center h-[32px] pl-[8px] shrink-0">
                <Svg w={17} h={14}><path d="M1 2h6l2 2h5v3H1z" fill="#777" /><path d="M1 13 3 7h14l-3 6z" fill="#f2cb80" /></Svg>
                <span className="ml-[8px] h-[20px] border-l border-[#d4d6dc]" />
                <span className="ml-[8px]">
                  <Svg w={16} h={16}><path d="M4 4h12v8H4M3 1v14M1 1h4M1 15h4" fill="none" stroke="#5a7ea8" /></Svg>
                </span>
                <span className="ml-[8px] h-[20px] border-l border-[#d4d6dc]" />
                <span className="ml-[7px]">
                  <Svg><path d="M1 1l14 14M15 1 1 15" stroke="#d9593a" strokeWidth="2.500" /></Svg>
                </span>
                <span className="ml-[9px] h-[20px] border-l border-[#d4d6dc]" />
                <span className="ml-[7px]">
                  <Svg><path d="m8 0 2.400 5.500 5.600.5-4.300 3.700 1.300 5.800L8 12.500 3 15.500l1.300-5.800L0 6l5.600-.5z" fill="#3f7fc4" /></Svg>
                </span>
              </div>
              <div className="flex-1 bg-white border border-[#a3a5b0] overflow-hidden">
                {rows.map((r, i) => <TreeRow key={i} r={r} idx={i} />)}
              </div>
            </div>

            <div className="ml-[6px] w-[290px] flex flex-col shrink-0 border-x border-[#b9bbc4] mb-[2px]">
              <div className="flex items-center justify-between h-[19px] pl-[4px] pr-[10px] bg-[#e1e3e8] text-[12px] font-bold text-[#9a9da8]">
                Daten
                <Pin c="#6d6f78" />
              </div>
              <div className="relative flex items-end h-[24px] pl-[5px] mt-[1px] text-[10.800px] text-[#3a3a44]">
                <div className="w-[77px] h-[23px] leading-[21px] text-center border-x border-t border-[#a3a5b0] bg-[#eceef2] text-[#5a5c68]">Definitionen</div>
                <div className="w-[61px] h-[21px] leading-[20px] text-center border-r border-t border-[#b4b6c0] bg-gradient-to-b from-[#eef0f3] to-[#dcdee3]">Abfragen</div>
                <div className="w-[61px] h-[21px] leading-[20px] ml-[1px] text-center border-x border-t border-[#b4b6c0] bg-gradient-to-b from-[#eef0f3] to-[#dcdee3]">Variablen</div>
                <div className="w-[13px] h-[21px] leading-[20px] ml-[1px] pl-[2px] overflow-hidden border-l border-t border-[#b4b6c0] bg-gradient-to-b from-[#eef0f3] to-[#dcdee3]">D</div>
                <div className="ml-auto mr-[8px] self-start mt-[3px] flex items-center gap-[13px]">
                  <Tri c="#1f3a94" w={9} /><Tri c="#b4b6c0" d="left" w={9} /><Tri c="#5a5c68" d="right" w={9} />
                </div>
              </div>
              <div className="mx-[2px] h-[184px] border border-[#a3a5b0] p-[2px] flex flex-col shrink-0">
                <div className="flex-1 border border-[#a3a5b0] bg-white flex flex-col text-[10.800px] text-[#23232b]">
                  <div className="h-[20px] pl-[3px] leading-[19px] bg-gradient-to-b from-[#fafafb] to-[#eff0f3] border-b border-[#c8cad0]">Element</div>
                  <div className="h-[19px] pl-[3px] leading-[18px] bg-[#f0f0f0] border-b border-[#d6d6da]">FLG_Flightdata</div>
                  <div className="h-[19px] pl-[3px] leading-[18px] border-b border-[#d6d6da]">PSG_Passengers</div>
                  <div className="h-[19px] pl-[3px] leading-[18px] border-b border-[#d6d6da]">CorrelationAnalysis</div>
                  <div className="flex-1" />
                  <div className="flex items-center h-[32px] bg-[#eaecf0] border-t border-[#c8cad0]">
                    <span className="ml-[6px]"><Svg w={10} h={8}><path d="m1 0 8 8M9 0 1 8" stroke="#111" strokeWidth="2.200" /></Svg></span>
                    <span className="ml-[4px] w-[13px] h-[13px] border border-[#8a8c94] bg-white text-[13px] leading-[10px] text-center font-bold text-[#333]">✓</span>
                    <span className="ml-[8px] w-[3px] h-[26px] border-l border-y border-[#9a9ca4]" />
                    <span className="ml-[1px] w-[56px] h-[20px] bg-[#e8c6a4] text-center leading-[19px] text-[#5a3a30]">Kategorie</span>
                    <span className="ml-[4px]">in</span>
                    <span className="ml-[5px] w-[40px] h-[20px] bg-[#c3d5c0] text-center leading-[19px] text-[#3a4a40]">TABLE</span>
                    <span className="ml-[2px] w-[16px] h-[20px] bg-gradient-to-r from-[#d6e0d4] to-[#eaecf0] leading-[19px] pl-[4px] text-[#b8bcc0] overflow-hidden">US</span>
                    <span className="ml-[10px] whitespace-nowrap">Filter bearbeiten</span>
                  </div>
                </div>
              </div>
              <div className="relative flex items-end h-[29px] pl-[5px] shrink-0">
                <div className="w-[113px] h-[23px] leading-[21px] text-center border-x border-t border-[#a3a5b0] bg-[#eceef2] text-[10.800px] text-[#6a6c78]">Inhalt (Flight times)</div>
                <span className="absolute right-[12px] top-[10px]"><Tri c="#1f3a94" w={10} /></span>
              </div>
              <div className="mx-[2px] flex-1 border border-[#a3a5b0] px-[6px] flex flex-col min-h-0">
                <div className="flex justify-end pr-[4px] pt-[5px] h-[26px] shrink-0">
                  <Svg w={13} h={15}><rect x=".5" y=".5" width="12" height="14" fill="none" stroke="#3f4a5c" /><path d="M3 3h3v3H3zM7.500 3h3v3h-3zM3 8h3v3H3zM7.500 8h3v3h-3z" fill="#3f7fc4" /></Svg>
                </div>
                <div className="flex h-[181px] bg-white border border-[#c4c6ce] overflow-hidden shrink-0">
                  <div className="w-[250px] p-[1px] overflow-hidden flex flex-col">
                    {scrollRows.map(t => <Field key={t} t={t} />)}
                  </div>
                  <div className="flex-1 flex flex-col items-center pt-[2px] bg-[#eaecf0]">
                    <Tri c="#8a8c94" w={7} />
                    <div className="w-[6px] h-[75px] mt-[7px] rounded-[3px] bg-[#c3c5cc]" />
                    <div className="mt-auto mb-[3px]"><Tri c="#8a8c94" w={9} /></div>
                  </div>
                </div>
                <div className="flex justify-center h-[8px] items-center shrink-0">
                  <span className="w-[13px] border-t-2 border-dotted border-[#9a9ca4]" />
                </div>
                <div className="h-[20px] pl-[2px] leading-[20px] text-[10.800px] text-[#33333b] whitespace-nowrap shrink-0">Felder zwischen den Bereichen unten ziehen:</div>
                <div className="flex justify-between shrink-0">
                  <DropBox top t="Filterbereich" icon={<span className="ml-[2px] mr-[3px]"><Svg w={12} h={14}><path d="M0 0h12L7.500 6v8h-3V6z" fill="#4c4e58" /></Svg></span>} />
                  <DropBox top t="Spaltenbereich" icon={<MiniGrid a="top" />}>
                    <Field t="FLG_Departure" check filter />
                    <Field t="FLG_Flightnum..." check />
                  </DropBox>
                </div>
                <div className="flex justify-between shrink-0 mt-[4px]">
                  <DropBox t="Zeilenbereich" icon={<MiniGrid a="left" />}>
                    <Field t="FLG_Destination" filter />
                  </DropBox>
                  <DropBox t="Datenbereich" icon={<Sigma c="#5a8ad8" />}>
                    <Field t="FLG_Departure_time ..." />
                    <Field t="FLG_Arrival (Maximum)" />
                  </DropBox>
                </div>
              </div>
              <div className="h-[3px] shrink-0" />
            </div>

            <div className="ml-[7px] flex-1 min-w-0 flex flex-col mb-[2px] pr-[4px]">
              <div className="relative flex items-end h-[26px] pl-[1px] shrink-0 border-b-2 border-[#a3a5b0]">
                <Tab w={111} icon={<Gantt />} t="Flight times" active close />
                <Tab w={96} icon={<Mono />} t="MonoRail" />
                <Tab w={101} icon={<Wand />} t="Reporting" />
                <Tab w={84} icon={<Sorter />} t="Sorter" />
                <Tab w={120} icon={<Gantt />} t="Flights missed" />
                <Tab w={140} icon={<Heat />} t="Passenger stats 2" />
                <Tab w={116} icon={<Pie />} t="Flight status" />
                <Tab w={66} icon={<Db />} t="Databas" />
                <div className="absolute right-[6px] top-[3px] flex items-center gap-[12px] bg-[#eaecf0] pl-[6px]">
                  <Tri c="#1f3a94" w={10} /><Tri c="#6d6f78" d="left" w={9} /><Tri c="#6d6f78" d="right" w={9} />
                </div>
              </div>
              <div className="flex flex-1 min-h-0 bg-white border-l border-[#a3a5b0] overflow-hidden">
                <Plot />
                <div className="pt-[48px] text-[#1e1e2a]">
                  <div className="w-[222px] h-[288px] border border-[#c8c8c8] px-[3px]">
                    <div className="h-[33px] pt-[2px] text-center text-[18px] font-bold leading-[30px] text-[#26202e]">Departure</div>
                    {legend.map(([t, c]) => (
                      <div key={t} className="flex items-center gap-[5px] h-[18px] text-[11.800px] font-bold whitespace-nowrap">
                        <span className={`w-[18px] h-[14px] border ${c} shrink-0`} />
                        {t}
                      </div>
                    ))}
                  </div>
                </div>
              </div>
            </div>
          </div>
        </div>
      </div>

      {/* status bar */}
      <div className="absolute inset-x-0 bottom-0 h-[36px] flex items-center justify-end gap-[13px] pr-[34px] bg-gradient-to-b from-[#48494b] to-[#505153] border-y border-[#3c3d40] text-[10.800px] text-[#222226]">
        4000 Datenzeilen geladen
        <Db c="#1d3f60" />
      </div>

      {/* callout over the ribbon */}
      <div className="absolute left-[281px] top-[115px] text-[29px] leading-[40px] font-semibold text-white font-['Open_Sans',sans-serif]">Projektfenster</div>
    </div>
  )
}
